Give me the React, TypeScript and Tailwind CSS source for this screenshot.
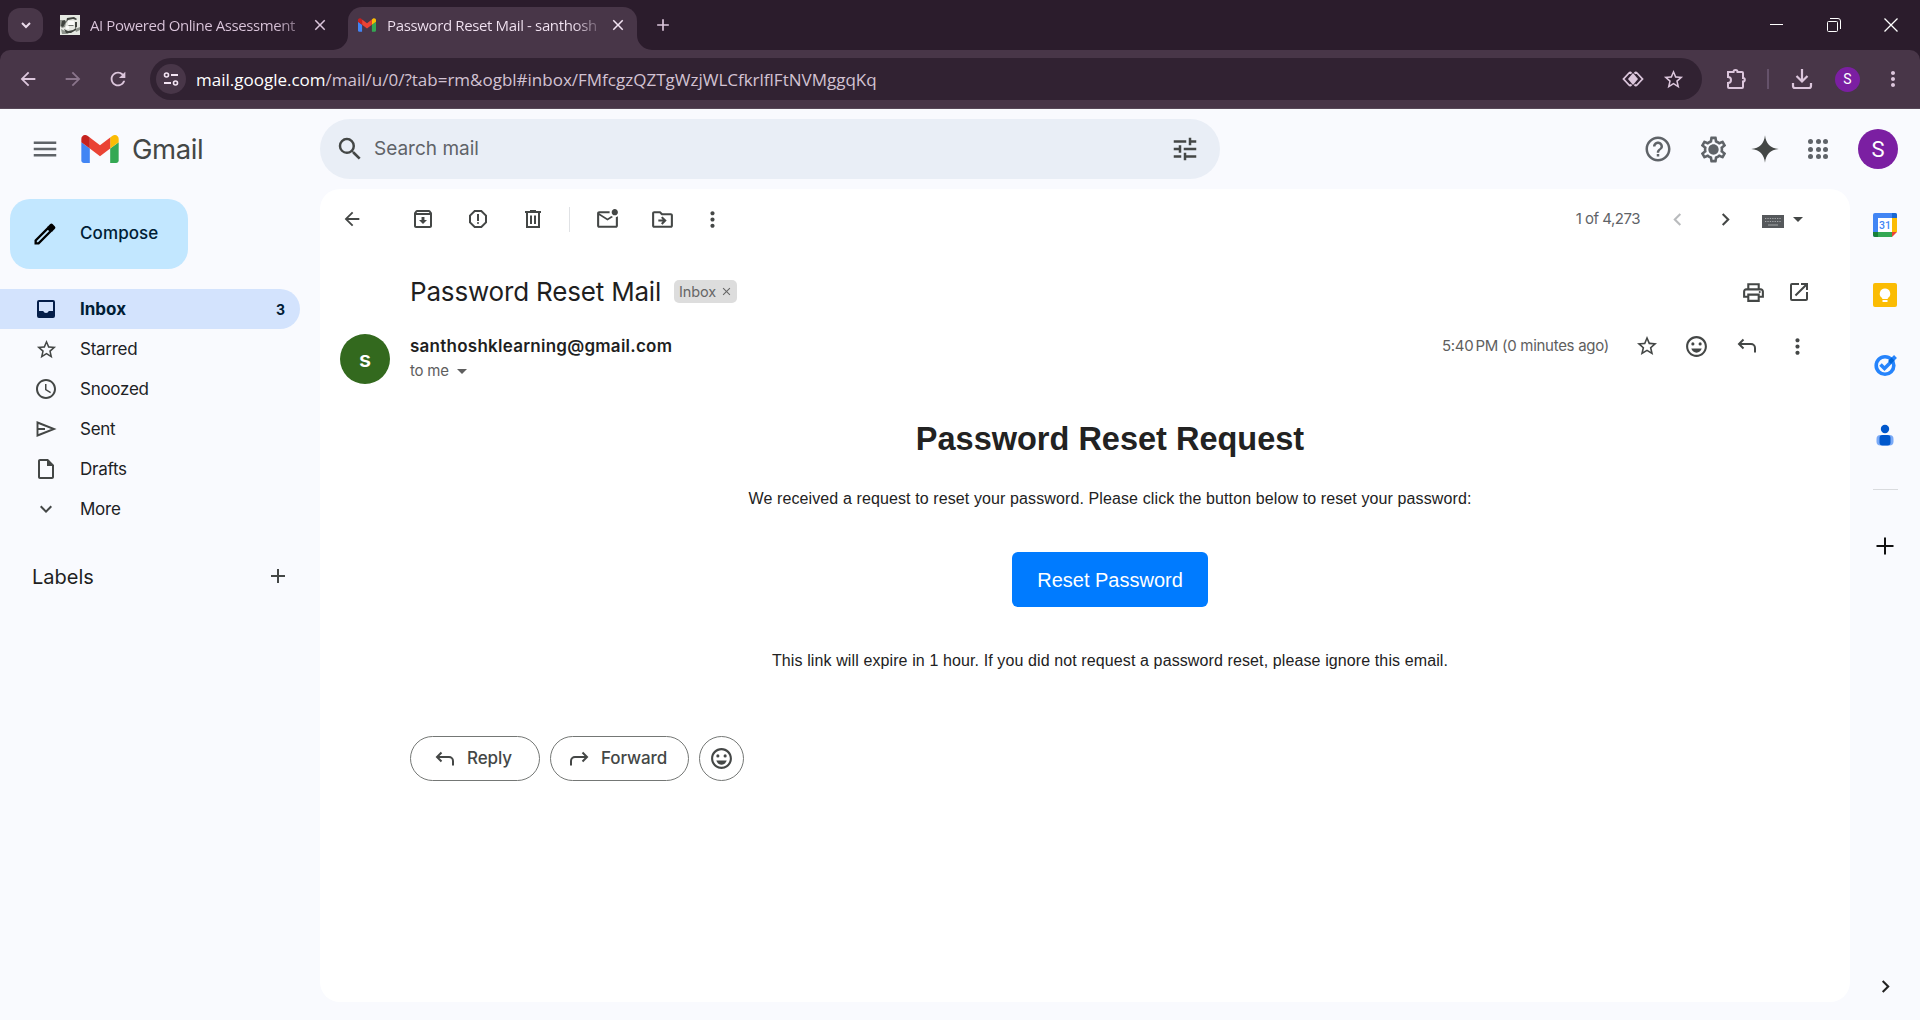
import React from "react";
import {
  MdOutlineArchive,
  MdOutlineReport,
  MdOutlineMarkEmailUnread,
  MdOutlineDriveFileMove,
  MdMoreVert,
  MdOutlinePrint,
  MdOpenInNew,
  MdStarBorder,
  MdOutlineEmojiEmotions,
  MdTune,
  MdSearch,
  MdMenu,
  MdHelpOutline,
  MdOutlineSettings,
  MdAccessTime,
  MdOutlineInsertDriveFile,
  MdExpandMore,
  MdAdd,
  MdClose,
  MdArrowBack,
  MdArrowForward,
  MdRefresh,
  MdArrowDropDown,
  MdChevronLeft,
  MdChevronRight,
} from "react-icons/md";

type SvgProps = { className?: string; children: React.ReactNode; box?: string };

function Svg({ className = "", children, box = "0 0 24 24" }: SvgProps) {
  return (
    <svg viewBox={box} className={`shrink-0 ${className}`} fill="none" stroke="currentColor" strokeWidth="2">
      {children}
    </svg>
  );
}

/** Fixed-width slot that centres an icon. */
function Cell({ className = "", children }: { className?: string; children: React.ReactNode }) {
  return <div className={`flex shrink-0 items-center justify-center ${className}`}>{children}</div>;
}

function GmailMark({ className = "" }: { className?: string }) {
  return (
    <Svg box="52 42 88 66" className={className}>
      <g stroke="none">
        <path fill="#4285f4" d="M58 108h14V74L52 59v43c0 3.32 2.69 6 6 6" />
        <path fill="#34a853" d="M120 108h14c3.32 0 6-2.69 6-6V59l-20 15" />
        <path fill="#fbbc04" d="M120 48v26l20-15v-8c0-7.42-8.47-11.65-14.4-7.2" />
        <path fill="#ea4335" d="M72 74V48l24 18 24-18v26L96 92" />
        <path fill="#c5221f" d="M52 51v8l20 15V48l-5.6-4.2c-5.94-4.45-14.4-.22-14.4 7.2" />
      </g>
    </Svg>
  );
}

function ReplyArrow({ className = "" }: { className?: string }) {
  return (
    <Svg className={className}>
      <path d="M8.5 5.500 4 10l4.500 4.500M4.500 10H16a4 4 0 0 1 4 4v4.500" />
    </Svg>
  );
}

function Trash({ className = "" }: { className?: string }) {
  return (
    <Svg className={className}>
      <path d="M4 5h16M9 4h6M6 5v15h12V5M10 8.5v8.5M14 8.5v8.5" />
    </Svg>
  );
}

function TabStrip() {
  return (
    <div className="flex h-[50px] bg-[#2b1c2c] text-[#dcc6dc]">
      <div className="mt-2 ml-2 flex h-[34px] w-[35px] items-center justify-center rounded-xl bg-[#483648]">
        <Svg className="size-[16px] text-[#eadbea]">
          <path d="m6 9 6 6 6-6" strokeWidth="3" />
        </Svg>
      </div>
      <div className="ml-[17px] flex h-[50px] w-[273px] items-center">
        <Svg box="0 0 20 20" className="size-5">
          <g stroke="none">
            <path fill="#e6e9e3" d="M0 0h20v20H0z" />
            <path fill="#8e938c" d="M0 5h4l2 3-1 4-3 1-2-2zM1 14l4 2 4 3H2zM15 14l5-2v3l-4 2z" />
            <path fill="#3f433e" d="M2 6l3-1 1 2-3 5-2-1zM7 3l7-1 3 2-1 1-3-1-5 1-2 3zM15 7h2v5l-2 1zM4 14l4 2 5-1 3-2v2l-5 3H6z" />
            <path fill="#fafbf9" d="M8 6h6v4H8zM6 11h3v3H6z" />
            <path fill="#6d716b" d="M8 10h6l-1 1H9z" />
          </g>
        </Svg>
        <div className="ml-[10px] w-[210px] whitespace-nowrap bg-gradient-to-r from-[#dcc6dc] from-88% to-[#dcc6dc66] bg-clip-text font-['Open_Sans'] text-[15px] tracking-[-0.42px] text-transparent">
          AI Powered Online Assessment
        </div>
        <MdClose className="ml-[11px] size-[18px]" />
      </div>
      <div className="mt-[7px] flex h-[43px] w-[319px]">
        <svg className="mt-[28px] h-[15px] w-[15px] shrink-0" viewBox="0 0 15 15">
          <path d="M15 0v15H0A15 15 0 0 0 15 0" fill="#483648" />
        </svg>
        <div className="flex h-[43px] w-[289px] items-center rounded-t-[14px] bg-[#483648] pb-[7px] text-[#f3e4f3]">
          <GmailMark className="ml-[10px] h-[14px] w-[18px]" />
          <div className="ml-[11px] w-[212px] whitespace-nowrap bg-gradient-to-r from-[#f3e4f3] from-88% to-[#f3e4f333] bg-clip-text font-['Open_Sans'] text-[15px] tracking-[-0.36px] text-transparent">
            Password Reset Mail - santhosh
          </div>
          <MdClose className="ml-[10px] size-[18px]" />
        </div>
        <svg className="mt-[28px] h-[15px] w-[15px] shrink-0" viewBox="0 0 15 15">
          <path d="M0 0v15h15A15 15 0 0 1 0 0" fill="#483648" />
        </svg>
      </div>
      <Cell className="w-[22px]">
        <MdAdd className="size-5" />
      </Cell>
      <div className="mr-px ml-auto flex h-[50px] items-center text-white">
        <Cell className="w-[57px]">
          <svg className="size-[14px]" viewBox="0 0 14 14">
            <path d="M0 6.5h13" stroke="currentColor" />
          </svg>
        </Cell>
        <Cell className="w-[57px]">
          <svg className="size-[14px]" viewBox="0 0 14 14" fill="none" stroke="currentColor">
            <rect x="0.5" y="3.5" width="10" height="10" rx="1" />
            <path d="M3 .5h8A2.500 2.500 0 0 1 13.500 3v8" />
          </svg>
        </Cell>
        <Cell className="w-[57px]">
          <svg className="size-[14px]" viewBox="0 0 14 14" fill="none" stroke="currentColor" strokeWidth="1.300">
            <path d="m.5.5 13 13M13.500.5l-13 13" />
          </svg>
        </Cell>
      </div>
    </div>
  );
}

function AddressBar() {
  return (
    <div className="bg-[#2b1c2c]">
      <div className="flex h-[59px] items-center rounded-t-[10px] border-b border-[#574858] bg-[#483648] text-[#dcc6dc]">
        <Cell className="ml-[5px] w-[45px]">
          <MdArrowBack className="size-[22px]" />
        </Cell>
        <Cell className="w-[45px] text-[#8a758b]">
          <MdArrowForward className="size-[22px]" />
        </Cell>
        <Cell className="w-[45px]">
          <MdRefresh className="size-[22px]" />
        </Cell>
        <div className="ml-[10px] flex h-[42px] w-[1552px] items-center rounded-full bg-[#312232]">
          <div className="ml-[6px] flex size-[30px] items-center justify-center rounded-full bg-[#483648]">
            <Svg box="0 0 16 16" className="size-4 text-[#f3e4f3]">
              <circle cx="3.500" cy="4" r="2" strokeWidth="1.600" />
              <circle cx="12.500" cy="12" r="2" strokeWidth="1.600" />
              <path d="M8 4h7M1 12h7" strokeWidth="1.800" />
            </Svg>
          </div>
          <div className="ml-[10px] flex-1 pt-px whitespace-nowrap font-['Open_Sans'] text-[17px] text-[#d3c2d3]">
            <span className="text-white">mail.google.com</span>
            /mail/u/0/?tab=rm&amp;ogbl#inbox/FMfcgzQZTgWzjWLCfkrlflFtNVMggqKq
          </div>
          <Cell className="w-10">
            <Svg box="0 0 22 18" className="h-[18px] w-[22px]">
              <path d="M8 2 1.500 9 8 16M14 2l6.500 7L14 16M8 2l1.500 1.500M14 2l-1.500 1.500M8 16l1.500-1.500M14 16l-1.500-1.500" strokeWidth="1.800" />
              <path d="M11 3 6 9l5 6 5-6z" fill="currentColor" stroke="none" />
            </Svg>
          </Cell>
          <Cell className="mr-[9px] w-10">
            <MdStarBorder className="size-[23px]" />
          </Cell>
        </div>
        <Cell className="ml-[14px] w-10">
          <Svg className="size-[24px]">
            <path d="M4 5h5.500a2 2 0 0 1 4 0H18a1 1 0 0 1 1 1v5a1.800 1.800 0 0 1 0 3.600V20a1 1 0 0 1-1 1H5a1 1 0 0 1-1-1v-4a3 3 0 0 0 0-6z" />
          </Svg>
        </Cell>
        <div className="ml-[11px] h-5 w-[2px] bg-[#65526a]" />
        <Cell className="ml-[13px] w-10">
          <Svg className="size-[24px]">
            <path d="M12 2v12M6.500 9l5.500 5.500L17.500 9M3 16v3a2 2 0 0 0 2 2h14a2 2 0 0 0 2-2v-3" strokeWidth="2.200" />
          </Svg>
        </Cell>
        <div className="ml-[13px] flex size-[25px] items-center justify-center rounded-full bg-[#7b1fa2] font-[Roboto] text-[14px] text-white">
          S
        </div>
        <Cell className="ml-[21px] w-[24px]">
          <MdMoreVert className="size-[26px]" />
        </Cell>
      </div>
    </div>
  );
}

function Header() {
  return (
    <header className="flex h-[80px] items-center text-[#5f6368]">
      <MdMenu className="ml-[30px] size-[30px]" />
      <GmailMark className="ml-[21px] h-[28px] w-[38px]" />
      <div className="ml-[13px] w-[174px] pt-[2px] text-[27.500px] tracking-[-0.4px] text-[#444746]">Gmail</div>
      <div className="ml-[14px] flex h-[60px] w-[900px] items-center rounded-full bg-[#e9eef6]">
        <MdSearch className="ml-[15px] size-[30px] text-[#444746]" />
        <div className="ml-[9px] flex-1 pt-px text-[19px]">Search mail</div>
        <MdTune className="mr-[20px] size-[30px] text-[#444746]" />
      </div>
      <Cell className="ml-[408px] w-[60px]">
        <MdHelpOutline className="size-[30px]" />
      </Cell>
      <Cell className="relative w-[50px]">
        <MdOutlineSettings className="size-[31px]" />
        <span className="absolute size-[8px] rounded-full bg-[#5f6368]" />
      </Cell>
      <Cell className="w-[54px]">
        <Svg className="size-[30px] text-[#444746]">
          <path d="M12 1c.7 6.800 4.200 10.300 11 11-6.800.7-10.300 4.200-11 11-.7-6.800-4.200-10.300-11-11C7.800 11.300 11.300 7.800 12 1" fill="currentColor" stroke="none" />
        </Svg>
      </Cell>
      <Cell className="w-[52px]">
        <div className="grid grid-cols-3 gap-[2.5px]">
          {[0, 1, 2, 3, 4, 5, 6, 7, 8].map((n) => (
            <span key={n} className="size-[5px] rounded-full bg-[#5f6368]" />
          ))}
        </div>
      </Cell>
      <div className="ml-[14px] flex size-10 items-center justify-center rounded-full bg-[#7b1fa2] font-[Roboto] text-[22px] text-white">
        S
      </div>
    </header>
  );
}

const folders: { name: string; icon: React.ReactNode }[] = [
  { name: "Starred", icon: <MdStarBorder className="size-[23px]" /> },
  { name: "Snoozed", icon: <MdAccessTime className="size-[24px]" /> },
  {
    name: "Sent",
    icon: (
      <Svg className="size-[24px]">
        <path d="M3.500 5.500v13L20 12zM4 12h7" strokeWidth="1.900" />
      </Svg>
    ),
  },
  { name: "Drafts", icon: <MdOutlineInsertDriveFile className="size-[24px]" /> },
  { name: "More", icon: <MdExpandMore className="size-[24px]" /> },
];

function Sidebar() {
  return (
    <nav className="flex w-[320px] shrink-0 flex-col text-[#444746]">
      <div className="mt-[10px] ml-[10px] flex h-[70px] w-[178px] items-center rounded-[20px] bg-[#c2e7ff] pl-[21px]">
        <Svg className="size-[28px] text-black">
          <path d="M4 17.500V20h2.500L17 9.500 14.500 7z" strokeWidth="2" />
          <path d="m14 6 2.500-2.500a1.500 1.500 0 0 1 2 0l2 2a1.500 1.500 0 0 1 0 2L18 10z" fill="currentColor" stroke="none" />
        </Svg>
        <span className="ml-[21px] text-[17px] font-medium tracking-[0.1px] text-[#001d35]">Compose</span>
      </div>
      <div className="mt-[20px] flex h-10 w-[300px] items-center rounded-r-full bg-[#d3e3fd] text-[#001d35]">
        <Cell className="ml-[31px] w-[30px]">
          <Svg box="0 0 18 18" className="size-[18px] text-[#041e49]">
            <path
              d="M2 0h14a2 2 0 0 1 2 2v14a2 2 0 0 1-2 2H2a2 2 0 0 1-2-2V2a2 2 0 0 1 2-2m0 2v9h4.200a3 3 0 0 0 5.600 0H16V2z"
              fill="currentColor"
              fillRule="evenodd"
              stroke="none"
            />
          </Svg>
        </Cell>
        <span className="ml-[19px] pt-[2px] text-[17px] font-bold">Inbox</span>
        <span className="mr-[15px] ml-auto text-[14px] font-bold">3</span>
      </div>
      {folders.map((f) => (
        <div key={f.name} className="flex h-10 items-center">
          <Cell className="ml-[31px] w-[30px]">{f.icon}</Cell>
          <span className="ml-[19px] pt-[2px] text-[17px] tracking-[-0.26px] text-[#202124]">{f.name}</span>
        </div>
      ))}
      <div className="mt-[27px] flex h-10 items-center">
        <span className="ml-[32px] pt-px text-[20px] text-[#1f1f1f]">Labels</span>
        <MdAdd className="mr-[30px] ml-auto size-[24px]" />
      </div>
    </nav>
  );
}

function MailToolbar() {
  return (
    <div className="flex h-[60px] items-center text-[#444746]">
      <Cell className="ml-[12px] w-10">
        <MdArrowBack className="size-[22px]" />
      </Cell>
      <Cell className="ml-[23px] w-[55px]">
        <MdOutlineArchive className="size-[24px]" />
      </Cell>
      <Cell className="w-[55px]">
        <MdOutlineReport className="size-[24px]" />
      </Cell>
      <Cell className="w-[55px]">
        <Trash className="size-[24px]" />
      </Cell>
      <div className="ml-[9px] h-[25px] w-px bg-[#e0e2e5]" />
      <Cell className="ml-[10px] w-[55px]">
        <MdOutlineMarkEmailUnread className="size-[25px]" />
      </Cell>
      <Cell className="w-[55px]">
        <MdOutlineDriveFileMove className="size-[25px]" />
      </Cell>
      <Cell className="w-[45px]">
        <MdMoreVert className="size-[25px]" />
      </Cell>
      <div className="ml-auto text-[15px] tracking-[-0.5px] text-[#5f6368]">1 of 4,273</div>
      <Cell className="ml-[13px] w-[48px]">
        <MdChevronLeft className="size-[25px] text-[#b9bbbd]" />
      </Cell>
      <Cell className="w-[49px]">
        <MdChevronRight className="size-[25px]" />
      </Cell>
      <Svg box="0 0 22 13" className="mt-[4px] ml-[12px] h-[13px] w-[22px]">
        <path d="M0 0h22v13H0z" fill="#55585b" stroke="none" />
        <path d="M3 3.500h16M3 6.500h16" stroke="#a4a6a8" strokeWidth="1.200" strokeDasharray="1.300 1.100" />
        <path d="M6 10h10" stroke="#a4a6a8" strokeWidth="1" />
      </Svg>
      <MdArrowDropDown className="mr-[40px] ml-[2px] size-[24px]" />
    </div>
  );
}

function Message() {
  return (
    <>
      <div className="mt-[19px] flex h-[48px] items-center pl-[90px] text-[#444746]">
        <h2 className="w-[252px] pb-[2px] whitespace-nowrap text-[26px] tracking-[-0.18px] text-[#1f1f1f]">Password Reset Mail</h2>
        <div className="mb-px ml-[12px] flex h-[23px] w-[63px] items-center rounded-[5px] bg-[#ddd] pl-[5px] text-[14.500px] tracking-[-0.1px] text-[#666]">
          Inbox
          <MdClose className="ml-[4px] size-[13px] shrink-0" />
        </div>
        <Cell className="ml-auto w-[46px]">
          <MdOutlinePrint className="size-[25px]" />
        </Cell>
        <Cell className="mr-[28px] w-[46px]">
          <MdOpenInNew className="size-[24px]" />
        </Cell>
      </div>
      <div className="mt-[8px] flex h-[60px] pl-5 text-[#5e5e5e]">
        <div className="mt-[10px] flex size-[50px] items-center justify-center rounded-full bg-[#33691e] text-[22px] font-semibold text-white">
          s
        </div>
        <div className="ml-5">
          <div className="mt-[10px] h-6 whitespace-nowrap text-[17px] leading-6 font-semibold tracking-[0.25px] text-[#1f1f1f]">
            santhoshklearning@gmail.com
          </div>
          <div className="flex h-[26px] items-center text-[15px] tracking-[-0.2px]">
            to me
            <MdArrowDropDown className="ml-px size-[24px]" />
          </div>
        </div>
        <div className="mt-[10px] ml-auto flex h-6 items-center text-[#444746]">
          <span className="text-[15px] tracking-[-0.28px] text-[#5e5e5e]">
            5:40<span className="ml-[2px]">PM (0 minutes ago)</span>
          </span>
          <Cell className="ml-[13px] w-[49px]">
            <MdStarBorder className="size-[24px]" />
          </Cell>
          <Cell className="w-[50px]">
            <MdOutlineEmojiEmotions className="size-[25px]" />
          </Cell>
          <Cell className="w-[51px]">
            <ReplyArrow className="size-[24px]" />
          </Cell>
          <Cell className="mr-[28px] w-[50px]">
            <MdMoreVert className="size-[25px]" />
          </Cell>
        </div>
      </div>
      <div className="ml-[90px] flex w-[1400px] flex-col items-center font-['Liberation_Sans'] whitespace-nowrap text-[#222]">
        <h1 className="mt-[35px] h-10 text-[32.500px] leading-10 font-bold">Password Reset Request</h1>
        <p className="mt-[28px] h-6 text-[16px] leading-6 tracking-[0.11px]">
          We received a request to reset your password. Please click the button below to reset your password:
        </p>
        <button className="mt-[41px] h-[55px] w-[196px] rounded-[6px] bg-[#007bff] text-[20px] text-white">Reset Password</button>
        <p className="mt-[42px] h-6 text-[16px] leading-6 tracking-[0.11px]">
          This link will expire in 1 hour. If you did not request a password reset, please ignore this email.
        </p>
      </div>
      <div className="mt-[63px] flex gap-[10px] pl-[90px] text-[17px] font-medium tracking-[-0.1px] text-[#444746]">
        <button className="flex h-[45px] w-[130px] items-center rounded-full border border-[#747775] pl-[22px]">
          <ReplyArrow className="size-[24px]" />
          <span className="ml-[10px]">Reply</span>
        </button>
        <button className="flex h-[45px] w-[139px] items-center rounded-full border border-[#747775] pl-[16px]">
          <ReplyArrow className="size-[24px] -scale-x-100" />
          <span className="ml-[10px]">Forward</span>
        </button>
        <button className="flex size-[45px] items-center justify-center rounded-full border border-[#747775]">
          <MdOutlineEmojiEmotions className="size-[25px]" />
        </button>
      </div>
    </>
  );
}

function SidePanel() {
  return (
    <aside className="flex w-[70px] shrink-0 flex-col items-center">
      <Svg box="0 0 24 24" className="mt-[24px] size-6">
        <g stroke="none">
          <rect width="24" height="24" rx="2" fill="#4285f4" />
          <path fill="#1967d2" d="M19 0h3a2 2 0 0 1 2 2v3h-5z" />
          <path fill="#fbbc04" d="M19 5h5v14h-5z" />
          <path fill="#34a853" d="M5 19h14v5H5z" />
          <path fill="#188038" d="M0 19h5v5H2a2 2 0 0 1-2-2z" />
          <path fill="#f9fafe" d="M19 24V19h5v5z" />
          <path fill="#ea4335" d="M19 24v-5h5z" />
          <path fill="#fff" d="M5 5h14v14H5z" />
        </g>
        <text x="12" y="16" textAnchor="middle" className="font-[Roboto]" fontSize="10.500" fontWeight="500" fill="#4285f4" stroke="none">
          31
        </text>
      </Svg>
      <Svg className="mt-[46px] size-6">
        <g stroke="none">
          <rect width="24" height="24" rx="2" fill="#fbbc04" />
          <path fill="#fff" d="M12 5.500a5.200 5.200 0 0 1 2.800 9.600V16H9.200v-.9A5.200 5.200 0 0 1 12 5.500M9.500 17h5v2h-5z" />
        </g>
      </Svg>
      <Svg className="mt-[46px] size-6">
        <circle cx="12" cy="12.500" r="8.800" stroke="#2684fc" strokeWidth="3.600" />
        <path d="m7.500 11.500 4 4 7-7" stroke="#2684fc" strokeWidth="3.600" />
        <path d="m16.500 9.500 4-4" stroke="#0066da" strokeWidth="4" />
        <path d="m20 6 2.500-2.500" stroke="#2684fc" strokeWidth="4" />
      </Svg>
      <Svg className="mt-[46px] size-6">
        <g stroke="none">
          <rect x="3.500" y="12" width="17" height="10.500" rx="4" fill="#7baaf7" />
          <rect x="6.500" y="12" width="11" height="10.500" rx="3" fill="#0057cc" />
          <circle cx="12" cy="6" r="4.200" fill="#0057cc" />
        </g>
      </Svg>
      <div className="mt-[42px] h-px w-[25px] bg-[#d9dbde]" />
      <Svg box="0 0 18 18" className="mt-[47px] size-[18px] text-[#111]">
        <path d="M9 0.500v17M.5 9h17" />
      </Svg>
      <MdChevronRight className="mt-auto mb-[21px] size-[25px] text-[#222]" />
    </aside>
  );
}

export default function App() {
  return (
    <div className="flex h-[1020px] w-[1920px] flex-col overflow-hidden bg-[#f9fafe] font-[Inter,sans-serif]">
      <TabStrip />
      <AddressBar />
      <Header />
      <div className="flex min-h-0 flex-1">
        <Sidebar />
        <main className="h-[813px] w-[1530px] shrink-0 rounded-[20px] bg-white">
          <MailToolbar />
          <Message />
        </main>
        <SidePanel />
      </div>
    </div>
  );
}
